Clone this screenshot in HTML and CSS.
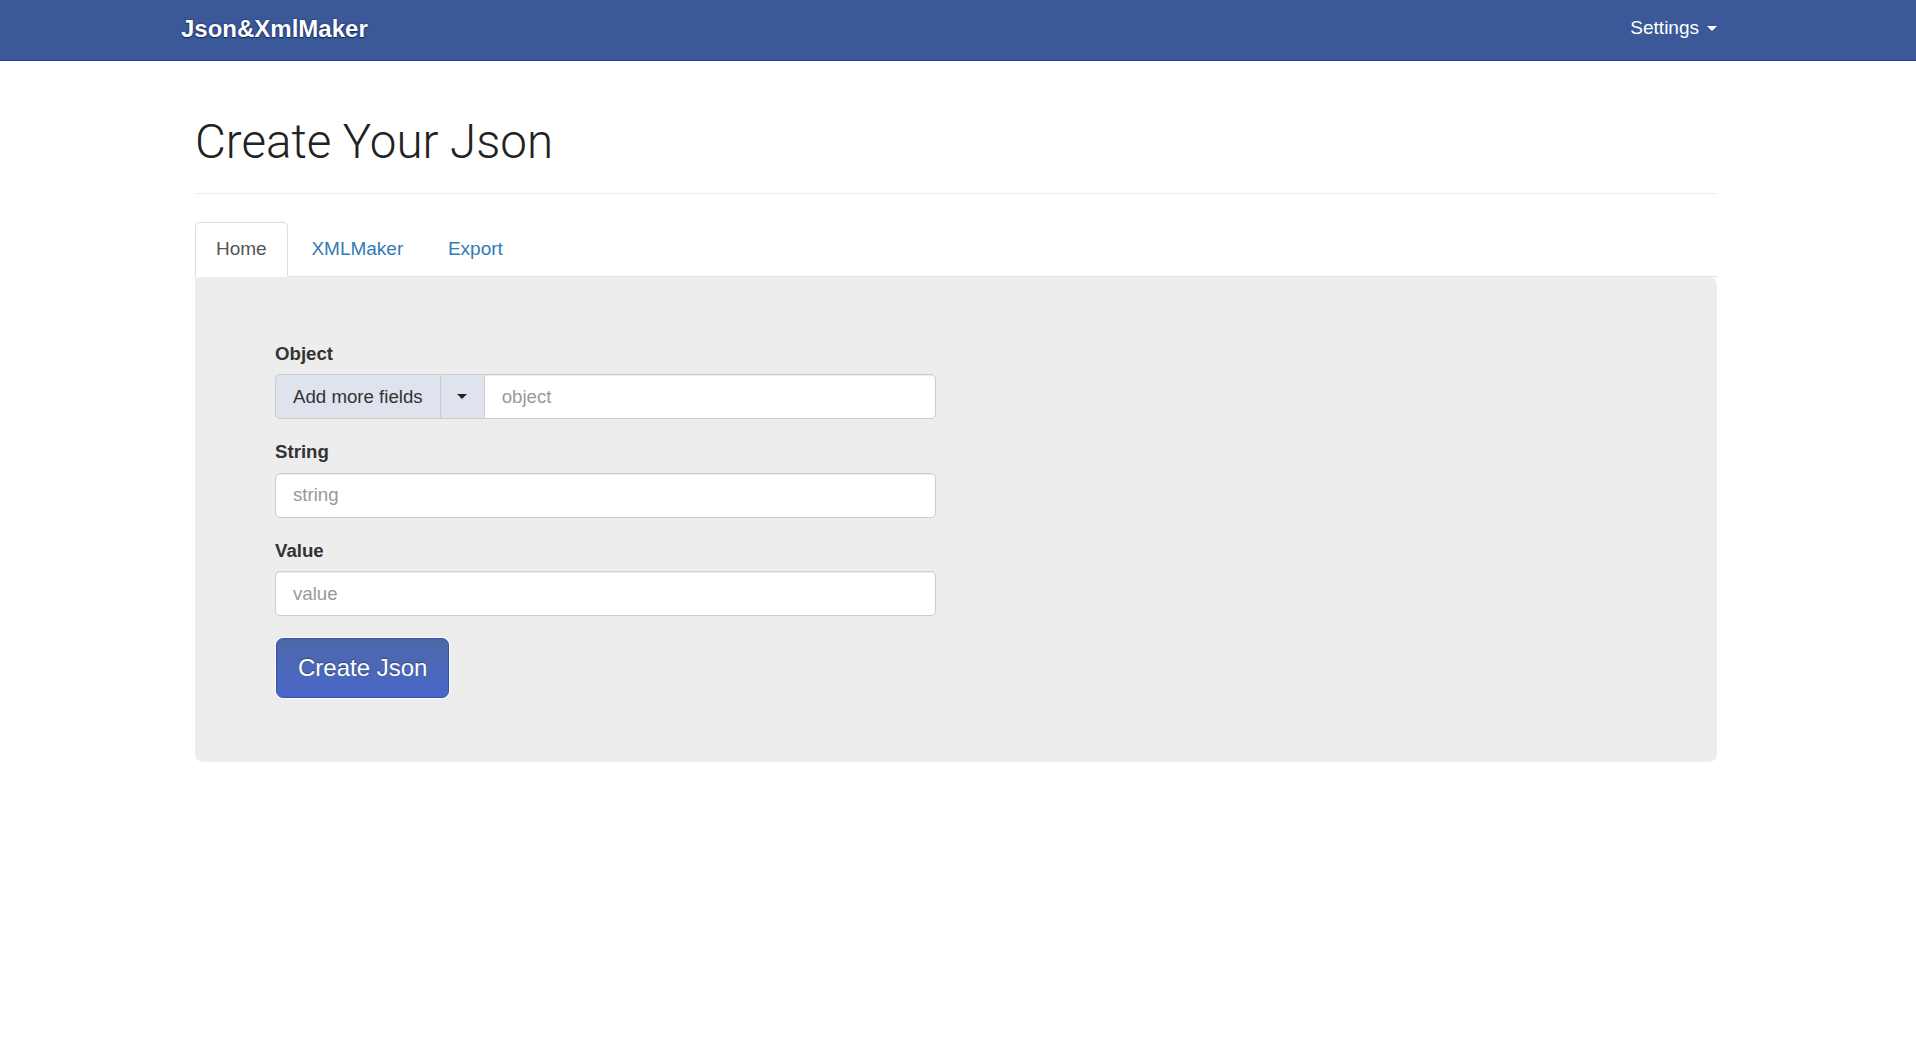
FILE: index.html
```html
<!DOCTYPE html>
<html lang="en">
<head>
<meta charset="utf-8">
<title>Json&amp;XmlMaker</title>
<link rel="stylesheet" href="styles.css">
</head>
<body>
<header class="navbar">
  <div class="nav-inner">
    <a class="brand" href="#">Json&amp;XmlMaker</a>
    <a class="settings" href="#">Settings <span class="caret"></span></a>
  </div>
</header>
<main class="container">
  <div class="page-header">
    <h1>Create Your Json</h1>
  </div>
  <ul class="tabs">
    <li class="tab active"><a href="#">Home</a></li>
    <li class="tab"><a href="#">XMLMaker</a></li>
    <li class="tab"><a href="#">Export</a></li>
  </ul>
  <section class="panel">
    <form class="form">
      <div class="form-group">
        <label class="label">Object</label>
        <div class="input-group">
          <button type="button" class="addon-btn">Add more fields</button>
          <button type="button" class="addon-btn caret-btn"><span class="caret dark"></span></button>
          <input class="input grouped" type="text" placeholder="object">
        </div>
      </div>
      <div class="form-group">
        <label class="label">String</label>
        <input class="input" type="text" placeholder="string">
      </div>
      <div class="form-group">
        <label class="label">Value</label>
        <input class="input" type="text" placeholder="value">
      </div>
      <button type="button" class="btn-primary">Create Json</button>
    </form>
  </section>
</main>
</body>
</html>
```

FILE: styles.css
```css
* { box-sizing: border-box; }

body {
  margin: 0;
  font-family: "Liberation Sans", Arial, Helvetica, sans-serif;
  font-size: 18.67px;
  line-height: 26.67px;
  color: #333;
  background: #fff;
}

a { text-decoration: none; }

.navbar {
  height: 61px;
  background: #3b5998;
  border-bottom: 1px solid #21409a;
}

.nav-inner {
  width: 1522px;
  height: 60px;
  margin-left: calc(50% - 763px);
  display: flex;
  align-items: center;
  justify-content: space-between;
}

.brand {
  margin-left: -14px;
  margin-bottom: 2px;
  font-size: 24px;
  font-weight: 700;
  line-height: 1;
  color: #fff;
  text-shadow: 0 0 2px rgba(10, 25, 80, 0.9), 0 1px 1px rgba(10, 25, 80, 0.7);
}

.settings {
  display: flex;
  align-items: center;
  gap: 8px;
  padding-bottom: 6px;
  font-size: 19px;
  line-height: 1;
  color: #fff;
}

.caret {
  display: inline-block;
  width: 0;
  height: 0;
  border-top: 5px solid #fff;
  border-left: 5px solid transparent;
  border-right: 5px solid transparent;
  margin-top: 2px;
}

.caret.dark { border-top-color: #222; margin-top: 0; }

.container {
  width: 1522px;
  margin-left: calc(50% - 763px);
}

.page-header {
  margin-top: 55px;
  margin-bottom: 28px;
  padding-bottom: 11px;
  border-bottom: 1px solid #eee;
}

h1 {
  margin: 0 0 13px;
  font-family: Roboto, "Liberation Sans", sans-serif;
  font-weight: 300;
  font-size: 47.5px;
  line-height: 52.8px;
  color: #222;
}

.tabs {
  list-style: none;
  margin: 0;
  padding: 0;
  display: flex;
  border-bottom: 1px solid #ddd;
}

.tab {
  margin-right: 2.7px;
  margin-bottom: -1px;
  font-size: 19px;
}

.tab a {
  display: block;
  padding: 13.3px 20px;
  border: 1px solid transparent;
  border-radius: 5px 5px 0 0;
  color: #337ab7;
}

.tab.active a {
  color: #555;
  background: #fff;
  border-color: #ddd;
  border-bottom-color: transparent;
}

.panel {
  background: #ededed;
  border-radius: 0 8px 8px 8px;
  padding: 64px 80px 64px;
}

.form { width: 661px; }

.form-group { margin-bottom: 20px; }

.label {
  display: block;
  font-weight: 700;
  margin-bottom: 6.7px;
}

.input-group {
  display: flex;
  height: 45px;
}

.addon-btn {
  font-family: inherit;
  font-size: 18.67px;
  color: #333;
  background: #dfe3ee;
  border: 1px solid #ccc;
  padding: 0 17px;
  height: 45px;
  border-radius: 5px 0 0 5px;
  white-space: nowrap;
}

.caret-btn {
  width: 45px;
  padding: 0;
  border-left: 1px solid #ccc;
  border-radius: 0;
  margin-left: -1px;
  display: flex;
  align-items: center;
  justify-content: center;
}

.input {
  display: block;
  width: 100%;
  height: 45px;
  padding: 0 17px;
  font-family: inherit;
  font-size: 18.67px;
  color: #555;
  background: #fff;
  border: 1px solid #ccc;
  border-radius: 5px;
  box-shadow: inset 0 1px 1px rgba(0, 0, 0, 0.075);
}

.input::placeholder { color: #999; }

.input.grouped {
  flex: 1;
  width: auto;
  border-radius: 0 5px 5px 0;
  margin-left: -1px;
}

.btn-primary {
  margin-top: 1.6px;
  margin-left: 1px;
  display: inline-block;
  padding: 13px 21px;
  font-family: inherit;
  font-size: 24px;
  line-height: 32px;
  color: #fff;
  background: linear-gradient(#4d68a8, #4967c9);
  border: 1px solid #3552a6;
  border-radius: 7px;
  text-shadow: 0 -1px 1px rgba(0, 0, 0, 0.35);
  box-shadow: 0 0 0 1px rgba(255, 255, 255, 0.7);
}
```
